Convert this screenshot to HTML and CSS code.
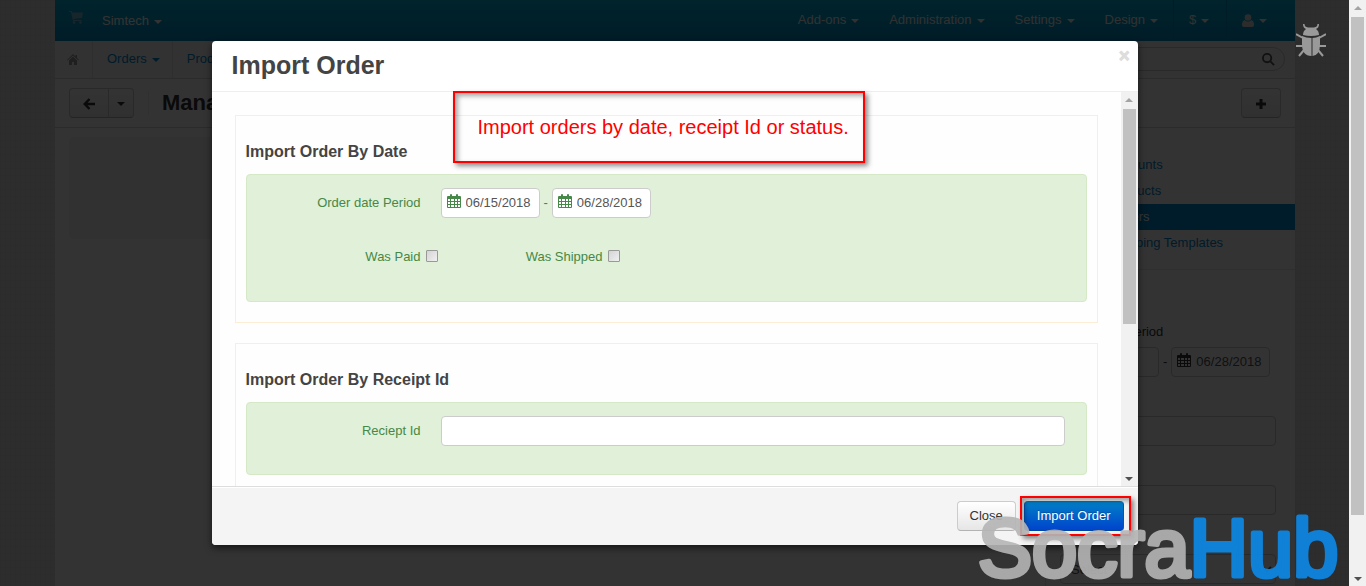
FILE: index.html
```html
<!DOCTYPE html>
<html lang="en">
<head>
    <meta charset="UTF-8">
    <meta name="viewport" content="width=device-width, initial-scale=1.0">
    <title>Import Order</title>
    <link rel="stylesheet" href="styles.css">
</head>
<body>

    <!-- Shared icons -->
    <svg class="sprite" width="0" height="0" aria-hidden="true">
        <symbol id="calendar" viewBox="0 0 14 14">
            <path fill-rule="evenodd" d="M1 2h2V1q0-1 1-1t1 1v1h4V1q0-1 1-1t1 1v1h2q1 0 1 1v10q0 1-1 1H1q-1 0-1-1V3q0-1 1-1zM1 5v2h2V5zM4 5v2h3V5zM8 5v2h2V5zM11 5v2h2V5zM1 8v2h2V8zM4 8v2h3V8zM8 8v2h2V8zM11 8v2h2V8zM1 11v2h2v-2zM4 11v2h3v-2zM8 11v2h2v-2zM11 11v2h2v-2z"/>
        </symbol>
    </svg>

    <div class="viewport">
        <div class="page">
            <nav class="topbar">
                <a href="#" class="cart" aria-label="Storefront">
                    <svg width="14" height="13" viewBox="0 0 14 13"><path d="M0 0h2.600l.5 1.500H14L13 7 4.500 8l.3 1H12.500v1H4L2 1H0z"/><circle cx="5" cy="11.500" r="1.300"/><circle cx="11.500" cy="11.500" r="1.300"/></svg>
                </a>
                <a href="#" class="company">Simtech<i class="caret"></i></a>
                <a href="#" class="push">Add-ons<i class="caret"></i></a>
                <a href="#">Administration<i class="caret"></i></a>
                <a href="#">Settings<i class="caret"></i></a>
                <a href="#">Design<i class="caret"></i></a>
                <a href="#" class="divided">$<i class="caret"></i></a>
                <a href="#" class="divided account" aria-label="Account">
                    <svg width="12" height="13" viewBox="0 0 12 13"><circle cx="6" cy="3.500" r="3.300"/><path d="M2.500 6Q6 9 9.500 6q2.500 1 2.500 5 0 2-2 2H2q-2 0-2-2 0-4 2.500-5z"/></svg><i class="caret"></i>
                </a>
            </nav>

            <nav class="subnav">
                <a href="#" class="home" aria-label="Home">
                    <svg width="12" height="11" viewBox="0 0 12 11"><path d="M6 0l2.500 2.500V1H10v3l2 2-.6.6L6 1.600.6 6.600 0 6z"/><path d="M6 2.600l4 4V11H7V8H5v3H2V6.600z"/></svg>
                </a>
                <a href="#">Orders<i class="caret"></i></a>
                <a href="#">Products<i class="caret"></i></a>
                <div class="search">
                    <input type="text" aria-label="Search">
                    <svg width="13" height="13" viewBox="0 0 14 14" fill="none" stroke="#555" stroke-width="2"><circle cx="5.500" cy="5.500" r="4.500"/><path d="M9 9l4 4"/></svg>
                </div>
            </nav>

            <div class="actions">
                <div class="btn-group">
                    <button type="button" class="btn back" aria-label="Back">
                        <svg width="12" height="12" viewBox="0 0 12 12" fill="none" stroke="#333" stroke-width="2.500"><path d="M6.500 1L1.800 6l4.700 5M2 6h10"/></svg>
                    </button>
                    <button type="button" class="btn more" aria-label="More"><i class="caret"></i></button>
                </div>
                <h1>Manage orders</h1>
                <button type="button" class="btn add" aria-label="Add">
                    <svg width="12" height="12" viewBox="0 0 12 12" stroke="#333" stroke-width="3"><path d="M6 1v10M1 6h10"/></svg>
                </button>
            </div>

            <div class="columns">
                <main class="content">
                    <div class="well"></div>
                </main>
                <aside class="sidebar">
                    <ul>
                        <li><a href="#">Etsy Accounts</a></li>
                        <li><a href="#">Etsy Products</a></li>
                        <li class="active"><a href="#">Etsy Orders</a></li>
                        <li><a href="#">Etsy Shipping Templates</a></li>
                    </ul>
                    <form class="filter">
                        <label for="filterFrom">Order date Period</label>
                        <div class="period">
                            <span class="date"><svg><use href="#calendar"/></svg><input type="text" id="filterFrom"></span>
                            <span>-</span>
                            <span class="date"><svg><use href="#calendar"/></svg><input type="text" aria-label="To" value="06/28/2018"></span>
                        </div>
                        <input type="text" class="field" aria-label="Receipt">
                        <input type="text" class="field" aria-label="Buyer">
                        <select class="field" aria-label="Status"><option>Select</option></select>
                    </form>
                </aside>
            </div>
        </div>

        <div class="backdrop">
            <div class="modal" role="dialog" aria-labelledby="modalTitle">
                <div class="modal-header">
                    <h2 id="modalTitle">Import Order</h2>
                    <button type="button" class="close" aria-label="Dismiss">×</button>
                </div>

                <div class="modal-body">
                    <form class="modal-scroll">
                        <section class="group">
                            <h3>Import Order By Date</h3>
                            <div class="panel tall">
                                <div class="row">
                                    <label for="dateFrom">Order date Period</label>
                                    <div class="period">
                                        <span class="date"><svg><use href="#calendar"/></svg><input type="text" id="dateFrom" value="06/15/2018"></span>
                                        <span>-</span>
                                        <span class="date"><svg><use href="#calendar"/></svg><input type="text" aria-label="Date to" value="06/28/2018"></span>
                                    </div>
                                </div>
                                <div class="row checks">
                                    <label for="paid">Was Paid</label>
                                    <input type="checkbox" id="paid">
                                    <label for="shipped">Was Shipped</label>
                                    <input type="checkbox" id="shipped">
                                </div>
                            </div>
                        </section>

                        <section class="group">
                            <h3>Import Order By Receipt Id</h3>
                            <div class="panel">
                                <div class="row">
                                    <label for="receipt">Reciept Id</label>
                                    <input type="text" id="receipt" class="field">
                                </div>
                            </div>
                        </section>
                    </form>
                    <div class="scrollbar inner">
                        <i class="arrow up"></i>
                        <i class="thumb"></i>
                        <i class="arrow down"></i>
                    </div>
                </div>

                <div class="modal-footer">
                    <button type="button" class="btn">Close</button>
                    <span class="highlight"><button type="button" class="btn primary">Import Order</button></span>
                </div>

                <div class="callout">Import orders by date, receipt Id or status.</div>
            </div>
        </div>

        <svg class="bug" width="30" height="33" viewBox="0 0 30 33" fill="#999" stroke="#999">
            <path stroke="none" d="M7 11q0-4 3-6-3-1-3-5h1.500q0 3 3.500 3.500h6Q21.500 3 21.500 0H23q0 4-3 5 3 2 3 6-8 2-16 0z"/>
            <path stroke="none" d="M6 12q4 2 9.500 2v18q-9.500 0-9.500-12zM24 12q-4 2-7.500 2v18q7.500-1 7.500-12z"/>
            <path fill="none" stroke-width="2" d="M0 10l7 4M30 10l-7 4M0 22h7M30 22h-7M3 32l5-6M27 32l-5-6"/>
        </svg>
    </div>

    <div class="scrollbar outer">
        <i class="arrow up"></i>
        <i class="thumb"></i>
        <i class="arrow down"></i>
    </div>

    <svg class="watermark" width="370" height="80" viewBox="0 0 370 80">
        <text x="0" y="70"><tspan class="gray">Socra</tspan><tspan class="blue">Hub</tspan></text>
    </svg>

</body>
</html>
```
FILE: styles.css
```css
* {
    box-sizing: border-box;
}

body {
    margin: 0;
    display: flex;
    min-height: 100vh;
    font-family: "Liberation Sans", Arial, sans-serif;
    font-size: 13px;
    line-height: 20px;
    color: #333;
}

button, input, select {
    font-family: inherit;
    font-size: 13px;
    color: #555;
}

a {
    color: #0388cc;
    text-decoration: none;
}

h1, h2, h3, ul {
    margin: 0;
    padding: 0;
}

.sprite {
    position: absolute;
}

.viewport {
    position: relative;
    flex: 1;
    height: 100vh;
    overflow: hidden;
    padding: 0 54px 0 55px;
    background-color: #e2e2e2;
    background-image:
        repeating-linear-gradient(90deg, rgba(0, 0, 0, 0.03) 0 1px, transparent 1px 5px),
        repeating-linear-gradient(rgba(0, 0, 0, 0.03) 0 1px, transparent 1px 7px);
}

.caret {
    display: inline-block;
    margin-left: 5px;
    border: 4px solid transparent;
    border-top-color: currentColor;
    border-bottom: 0;
    vertical-align: middle;
}

/* Page behind the dialog */
.page {
    display: flex;
    flex-direction: column;
    min-height: 100%;
    background: #fff;
}

.topbar {
    display: flex;
    height: 41px;
    background: linear-gradient(#00b0dc, #008cc4);
}

.topbar a {
    padding: 0 15px;
    line-height: 39px;
    color: #f4f4f4;
}

.topbar svg {
    fill: #ddd;
    vertical-align: middle;
}

.topbar .cart {
    padding: 0 4px 0 14px;
    line-height: 34px;
}

.topbar .cart svg {
    fill: #79bdd4;
}

.topbar .company {
    color: #fff;
    line-height: 41px;
}

.topbar .push {
    margin-left: auto;
}

.topbar .divided {
    width: 53px;
    border-left: 1px solid #0092c0;
}

.topbar .account {
    width: 69px;
}

.subnav {
    display: flex;
    height: 38px;
    background: #fafafa;
    border-bottom: 1px solid #d8d8d8;
}

.subnav a {
    padding: 0 12px 0 14px;
    line-height: 35px;
    border-right: 1px solid #e4e4e4;
}

.subnav .home {
    padding: 0 13px 0 12px;
}

.home svg {
    fill: #999;
    vertical-align: middle;
}

.search {
    display: flex;
    align-items: center;
    width: 230px;
    height: 24px;
    margin: 6px 10px 0 auto;
    padding: 0 9px;
    border: 1px solid #ccc;
    border-radius: 12px;
}

.search input {
    flex: 1;
    min-width: 0;
    border: 0;
    background: none;
}

.actions {
    display: flex;
    align-items: center;
    height: 49px;
    padding: 0 14px;
    border-bottom: 1px solid #d8d8d8;
}

.actions h1 {
    margin-left: 14px;
    padding-left: 13px;
    border-left: 1px solid #eee;
    font-size: 22px;
    line-height: 24px;
}

.btn {
    height: 30px;
    padding: 0 12px 1px;
    border: 1px solid #ccc;
    border-bottom-color: #b3b3b3;
    border-radius: 4px;
    background: linear-gradient(#fff, #e6e6e6);
    color: #333;
    cursor: pointer;
}

.btn-group {
    display: flex;
}

.btn.back {
    width: 40px;
    border-radius: 4px 0 0 4px;
}

.btn.more {
    width: 26px;
    margin-left: -1px;
    padding: 0;
    border-radius: 0 4px 4px 0;
}

.btn.more .caret {
    margin: 0;
}

.btn.add {
    width: 40px;
    margin-left: auto;
}

.actions .btn {
    background: linear-gradient(#fff, #f0f0f0);
}

.btn svg {
    vertical-align: middle;
}

.columns {
    display: flex;
    flex: 1;
}

.content {
    flex: 1;
    padding: 9px 14px;
}

.well {
    height: 102px;
    border-radius: 5px;
    background: #f6f6f6;
}

.sidebar {
    width: 250px;
    padding-top: 24px;
    border-left: 1px solid #e5e5e5;
}

.sidebar ul {
    padding-bottom: 13px;
    list-style: none;
    border-bottom: 1px solid #e8e8e8;
}

.sidebar li {
    padding: 3px 0 3px 35px;
}

.sidebar .active {
    background: #0388cc;
}

.sidebar .active a {
    color: #fff;
}

.filter {
    display: flex;
    flex-direction: column;
    padding: 52px 19px 0 14px;
}

.filter .field {
    margin-top: 39px;
}

.filter .period {
    margin-top: 5px;
}

/* Form controls */
.field {
    width: 100%;
    min-width: 0;
    height: 30px;
    padding: 4px 6px;
    border: 1px solid #ccc;
    border-radius: 4px;
    background: #fff;
}

.filter .field {
    flex: none;
}

.period {
    display: flex;
    align-items: center;
    gap: 4px;
}

.date {
    display: flex;
    align-items: center;
    gap: 5px;
    width: 99px;
    height: 30px;
    padding: 0 5px 2px;
    border: 1px solid #ccc;
    border-radius: 4px;
    background: #fff;
}

.date svg {
    flex: none;
    width: 14px;
    height: 14px;
    margin-bottom: 3px;
    fill: currentColor;
}

.date input {
    min-width: 0;
    width: 70px;
    padding: 0;
    border: 0;
    background: none;
}

/* Dialog */
.backdrop {
    position: absolute;
    inset: 0;
    display: flex;
    justify-content: center;
    align-items: flex-start;
    padding: 41px 20px;
    background: rgba(0, 0, 0, 0.8);
}

.modal {
    position: relative;
    width: 100%;
    max-width: 926px;
    border-radius: 4px;
    background: #fff;
    box-shadow: 0 3px 7px rgba(0, 0, 0, 0.6);
}

.modal-header {
    display: flex;
    justify-content: space-between;
    padding: 8px 8px 10px 20px;
    border-bottom: 1px solid #eee;
}

.modal-header h2 {
    font-size: 25px;
    line-height: 32px;
    color: #444;
}

.close {
    height: 14px;
    padding: 0;
    border: 0;
    background: none;
    font-size: 18px;
    font-weight: bold;
    line-height: 14px;
    color: #ddd;
    -webkit-text-stroke: 1px #ddd;
    cursor: pointer;
}

.modal-body {
    display: flex;
    height: 394px;
    background: #fefefe;
}

.modal-scroll {
    flex: 1;
    min-width: 0;
    padding: 23px;
    overflow: hidden;
}

.group {
    margin-bottom: 20px;
    padding: 26px 10px 20px;
    border: 1px solid #fbeed5;
}

.group h3 {
    margin-bottom: 12px;
    font-size: 16px;
    line-height: 20px;
    color: #444;
}

.panel {
    padding: 13px 21px 28px 0;
    border: 1px solid #d6e9c6;
    border-radius: 4px;
    background: #e0f0d9;
    color: #468847;
}

.panel.tall {
    padding-bottom: 34px;
}

.row {
    display: flex;
    align-items: center;
    gap: 20px;
}

.row label {
    flex: none;
    width: 174px;
    text-align: right;
}

.checks {
    gap: 5px;
    margin-top: 29px;
}

.checks label + input + label {
    width: 160px;
}

.checks input {
    appearance: none;
    width: 12px;
    height: 12px;
    margin: 0 0 2px;
    border: 1px solid #999;
    border-radius: 1px;
    background: linear-gradient(135deg, #d4d4d4, #f0f0f0);
}

.modal-footer {
    display: flex;
    justify-content: flex-end;
    gap: 8px;
    padding: 14px 14px 14px 15px;
    border-top: 1px solid #ddd;
    border-radius: 0 0 4px 4px;
    background: #f4f4f4;
    box-shadow: inset 0 1px 0 #fff;
}

.primary {
    border-color: #0077b3 #0055b8 #0044a4;
    background: linear-gradient(#0080c8, #0044cc);
    color: #fff;
    text-shadow: 0 -1px 0 rgba(0, 0, 0, 0.25);
}

/* Red annotations */
.highlight {
    position: relative;
}

.highlight::after {
    content: "";
    position: absolute;
    inset: -5px -7px -5px -4px;
    border: 2px solid #f00;
    box-shadow: 3px 3px 5px rgba(0, 0, 0, 0.45), inset 3px 3px 5px rgba(0, 0, 0, 0.35);
    pointer-events: none;
}

.callout {
    position: absolute;
    top: 50px;
    left: 241px;
    width: 412px;
    height: 72px;
    padding-left: 23px;
    border: 2px solid #f00;
    box-shadow: 3px 3px 5px rgba(0, 0, 0, 0.45), inset 3px 3px 5px rgba(0, 0, 0, 0.35);
    font-size: 20px;
    line-height: 68px;
    color: #f00;
}

.bug {
    position: absolute;
    top: 24px;
    right: 23px;
}

/* Scrollbars */
.scrollbar {
    display: flex;
    flex-direction: column;
    align-items: center;
    flex: none;
    width: 17px;
    background: #f1f1f1;
}

.scrollbar .thumb {
    width: 13px;
    background: #c1c1c1;
}

.inner .thumb {
    height: 215px;
}

.outer .thumb {
    height: 85%;
}

.arrow {
    margin: 6px 0 7px;
    border: 4px solid transparent;
}

.arrow.up {
    border-top: 0;
    border-bottom-color: #a3a3a3;
}

.arrow.down {
    margin: auto 0 5px;
    border-bottom: 0;
    border-top-color: #505050;
}

/* Watermark */
.watermark {
    position: absolute;
    right: 18px;
    bottom: 0;
    opacity: 0.9;
    pointer-events: none;
}

.watermark text {
    font-size: 81px;
    stroke-width: 5px;
    stroke-linejoin: round;
}

.gray {
    fill: #b5b5b5;
    stroke: #b5b5b5;
}

.blue {
    fill: #0c8ae8;
    stroke: #0c8ae8;
}
```
